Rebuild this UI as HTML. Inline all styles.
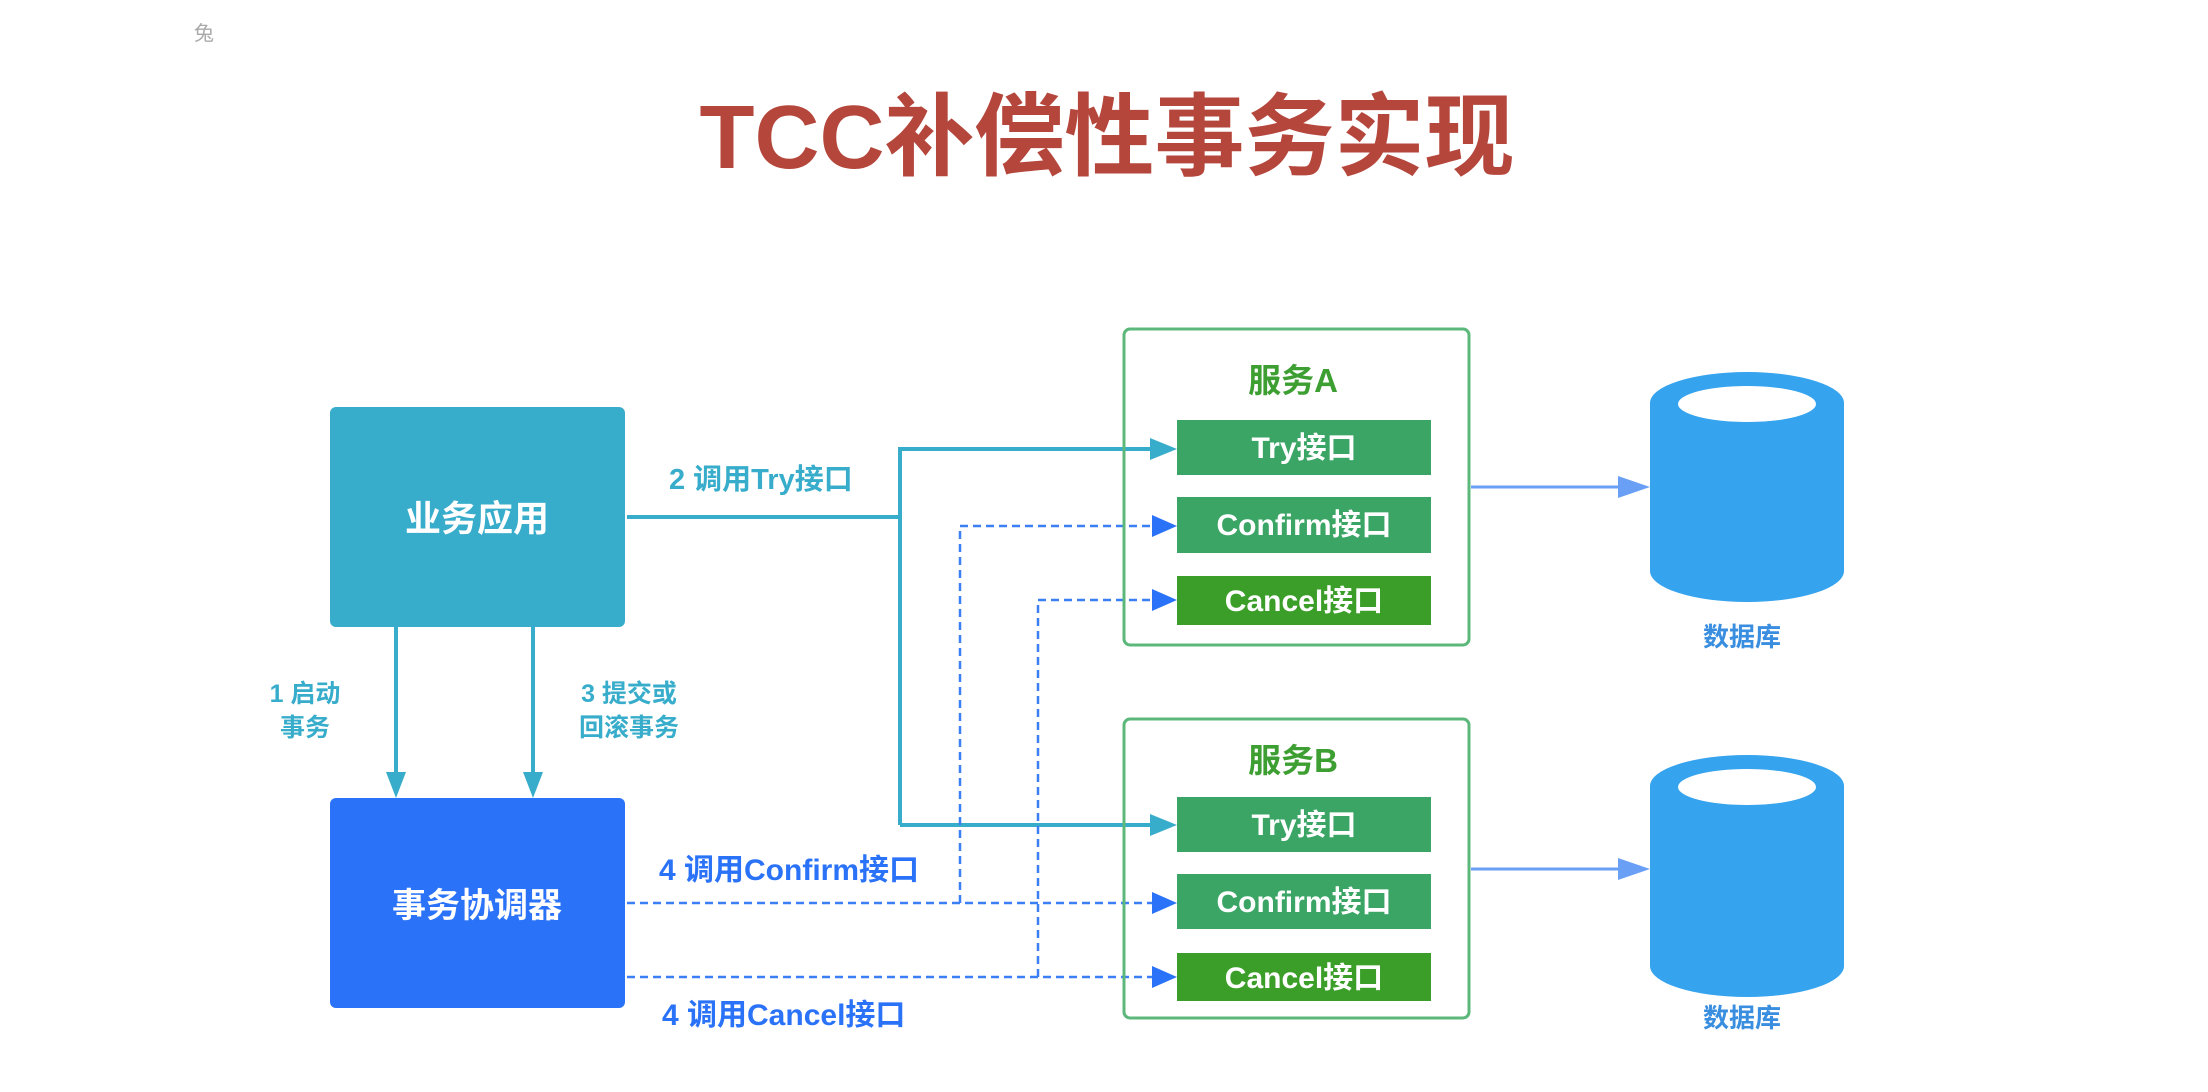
<!DOCTYPE html>
<html><head><meta charset="utf-8"><style>
html,body{margin:0;padding:0;background:#fff;width:2208px;height:1092px;overflow:hidden}
svg text{font-family:"Liberation Sans","Noto Sans CJK SC",sans-serif;font-weight:bold}
</style></head><body>
<svg width="2208" height="1092" viewBox="0 0 2208 1092" xmlns="http://www.w3.org/2000/svg">
<text x="194" y="40" font-size="20" fill="#aaa" style="font-weight:normal">兔</text>
<text x="1107" y="168" font-size="90" fill="#b5463c" text-anchor="middle">TCC补偿性事务实现</text>

<rect x="330" y="407" width="295" height="220" rx="6" fill="#38adcb"/>
<text x="477" y="531" font-size="36" fill="#fff" text-anchor="middle">业务应用</text>
<rect x="330" y="798" width="295" height="210" rx="6" fill="#2a72f8"/>
<text x="477" y="917" font-size="34" fill="#fff" text-anchor="middle">事务协调器</text>

<g stroke="#38adcb" stroke-width="4" fill="none"><line x1="396" y1="627" x2="396" y2="775"/><line x1="533" y1="627" x2="533" y2="775"/></g>
<path d="M386,772 L406,772 L396,798Z M523,772 L543,772 L533,798Z" fill="#38adcb"/>
<g font-size="25" fill="#38adcb" text-anchor="middle">
<text x="305" y="702">1 启动</text><text x="305" y="736">事务</text>
<text x="629" y="702">3 提交或</text><text x="629" y="736">回滚事务</text>
</g>

<g stroke="#38adcb" stroke-width="4" fill="none">
<polyline points="627,517 900,517"/>
<polyline points="900,825 900,449 1155,449"/>
<polyline points="900,825 1155,825"/>
</g>
<path d="M1150,438 L1177,449 L1150,460Z M1150,814 L1177,825 L1150,836Z" fill="#38adcb"/>
<text x="669" y="489" font-size="29" fill="#38adcb">2 调用Try接口</text>

<g stroke="#3b7ff5" stroke-width="2.5" fill="none" stroke-dasharray="8,5">
<polyline points="627,903 1155,903"/>
<polyline points="960,903 960,526 1155,526"/>
<polyline points="627,977 1155,977"/>
<polyline points="1038,977 1038,600 1155,600"/>
</g>
<path d="M1152,515 L1177,526 L1152,537Z M1152,589 L1177,600 L1152,611Z M1152,892 L1177,903 L1152,914Z M1152,966 L1177,977 L1152,988Z" fill="#2a72f8"/>
<text x="659" y="880" font-size="30" fill="#2a72f8">4 调用Confirm接口</text>
<text x="662" y="1025" font-size="30" fill="#2a72f8">4 调用Cancel接口</text>

<rect x="1124" y="329" width="345" height="316" rx="6" fill="none" stroke="#5cb87a" stroke-width="3"/>
<rect x="1124" y="719" width="345" height="299" rx="6" fill="none" stroke="#5cb87a" stroke-width="3"/>
<text x="1293" y="392" font-size="33" fill="#3d9e32" text-anchor="middle">服务A</text>
<text x="1293" y="772" font-size="33" fill="#3d9e32" text-anchor="middle">服务B</text>
<g fill="#3aa565">
<rect x="1177" y="420" width="254" height="55"/>
<rect x="1177" y="497" width="254" height="56"/>
<rect x="1177" y="797" width="254" height="55"/>
<rect x="1177" y="874" width="254" height="55"/>
</g>
<g fill="#3a9e28">
<rect x="1177" y="576" width="254" height="49"/>
<rect x="1177" y="953" width="254" height="48"/>
</g>
<g font-size="30" fill="#fff" text-anchor="middle">
<text x="1304" y="458">Try接口</text>
<text x="1304" y="535">Confirm接口</text>
<text x="1304" y="611">Cancel接口</text>
<text x="1304" y="835">Try接口</text>
<text x="1304" y="912">Confirm接口</text>
<text x="1304" y="988">Cancel接口</text>
</g>

<g stroke="#6a9ff6" stroke-width="3"><line x1="1471" y1="487" x2="1625" y2="487"/><line x1="1471" y1="869" x2="1625" y2="869"/></g>
<path d="M1618,476 L1650,487 L1618,498Z M1618,858 L1650,869 L1618,880Z" fill="#6a9ff6"/>

<g fill="#35a3ee">
<ellipse cx="1747" cy="403" rx="97" ry="31"/><rect x="1650" y="403" width="194" height="168"/><ellipse cx="1747" cy="571" rx="97" ry="31"/>
<ellipse cx="1747" cy="786" rx="97" ry="31"/><rect x="1650" y="786" width="194" height="180"/><ellipse cx="1747" cy="966" rx="97" ry="31"/>
</g>
<ellipse cx="1747" cy="404" rx="69" ry="18" fill="#fff"/>
<ellipse cx="1747" cy="787" rx="69" ry="18" fill="#fff"/>
<text x="1742" y="646" font-size="26" fill="#3a8ee0" text-anchor="middle">数据库</text>
<text x="1742" y="1027" font-size="26" fill="#3a8ee0" text-anchor="middle">数据库</text>
</svg>
</body></html>
